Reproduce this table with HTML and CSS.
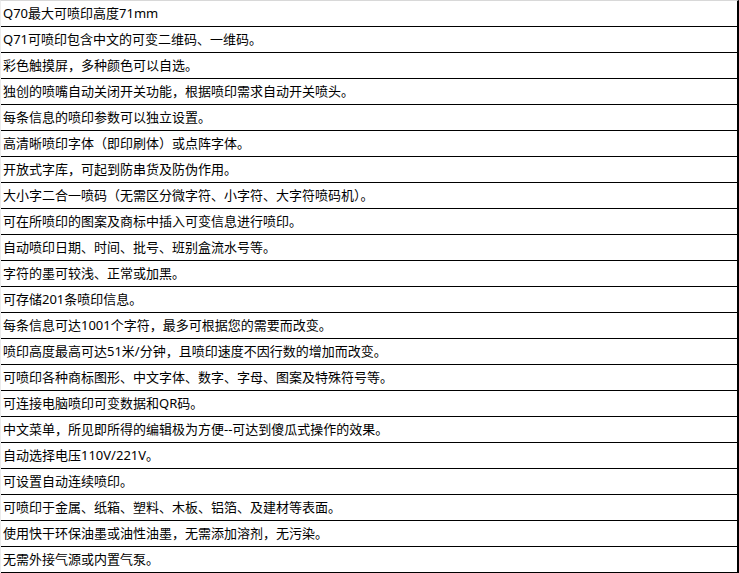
FILE: index.html
```html
<!DOCTYPE html>
<html lang="zh-CN">
<head>
<meta charset="utf-8">
<title>功能特点</title>
<link rel="stylesheet" href="styles.css">
</head>
<body>
<div class="list">
  <div class="row">Q70最大可喷印高度71mm</div>
  <div class="row">Q71可喷印包含中文的可变二维码、一维码。</div>
  <div class="row">彩色触摸屏，多种颜色可以自选。</div>
  <div class="row">独创的喷嘴自动关闭开关功能，根据喷印需求自动开关喷头。</div>
  <div class="row">每条信息的喷印参数可以独立设置。</div>
  <div class="row">高清晰喷印字体（即印刷体）或点阵字体。</div>
  <div class="row">开放式字库，可起到防串货及防伪作用。</div>
  <div class="row">大小字二合一喷码（无需区分微字符、小字符、大字符喷码机）。</div>
  <div class="row">可在所喷印的图案及商标中插入可变信息进行喷印。</div>
  <div class="row">自动喷印日期、时间、批号、班别盒流水号等。</div>
  <div class="row">字符的墨可较浅、正常或加黑。</div>
  <div class="row">可存储201条喷印信息。</div>
  <div class="row">每条信息可达1001个字符，最多可根据您的需要而改变。</div>
  <div class="row">喷印高度最高可达51米/分钟，且喷印速度不因行数的增加而改变。</div>
  <div class="row">可喷印各种商标图形、中文字体、数字、字母、图案及特殊符号等。</div>
  <div class="row">可连接电脑喷印可变数据和QR码。</div>
  <div class="row">中文菜单，所见即所得的编辑极为方便--可达到傻瓜式操作的效果。</div>
  <div class="row">自动选择电压110V/221V。</div>
  <div class="row">可设置自动连续喷印。</div>
  <div class="row">可喷印于金属、纸箱、塑料、木板、铝箔、及建材等表面。</div>
  <div class="row">使用快干环保油墨或油性油墨，无需添加溶剂，无污染。</div>
  <div class="row">无需外接气源或内置气泵。</div>
</div>
</body>
</html>
```

FILE: styles.css
```css
html, body {
  margin: 0;
  padding: 0;
  background: #fff;
}

.list {
  width: 739px;
  box-sizing: border-box;
  border-top: 1px solid #d8d8d8;
  border-left: 1px solid #ececec;
  border-right: 2px solid #000;
  display: flex;
  flex-direction: column;
}

.row {
  height: 25px;
  line-height: 25px;
  border-bottom: 1px solid #000;
  padding-left: 2px;
  font-family: "Noto Sans", "Noto Sans CJK SC", sans-serif;
  font-size: 13px;
  color: #000;
  white-space: nowrap;
  overflow: hidden;
}
```
